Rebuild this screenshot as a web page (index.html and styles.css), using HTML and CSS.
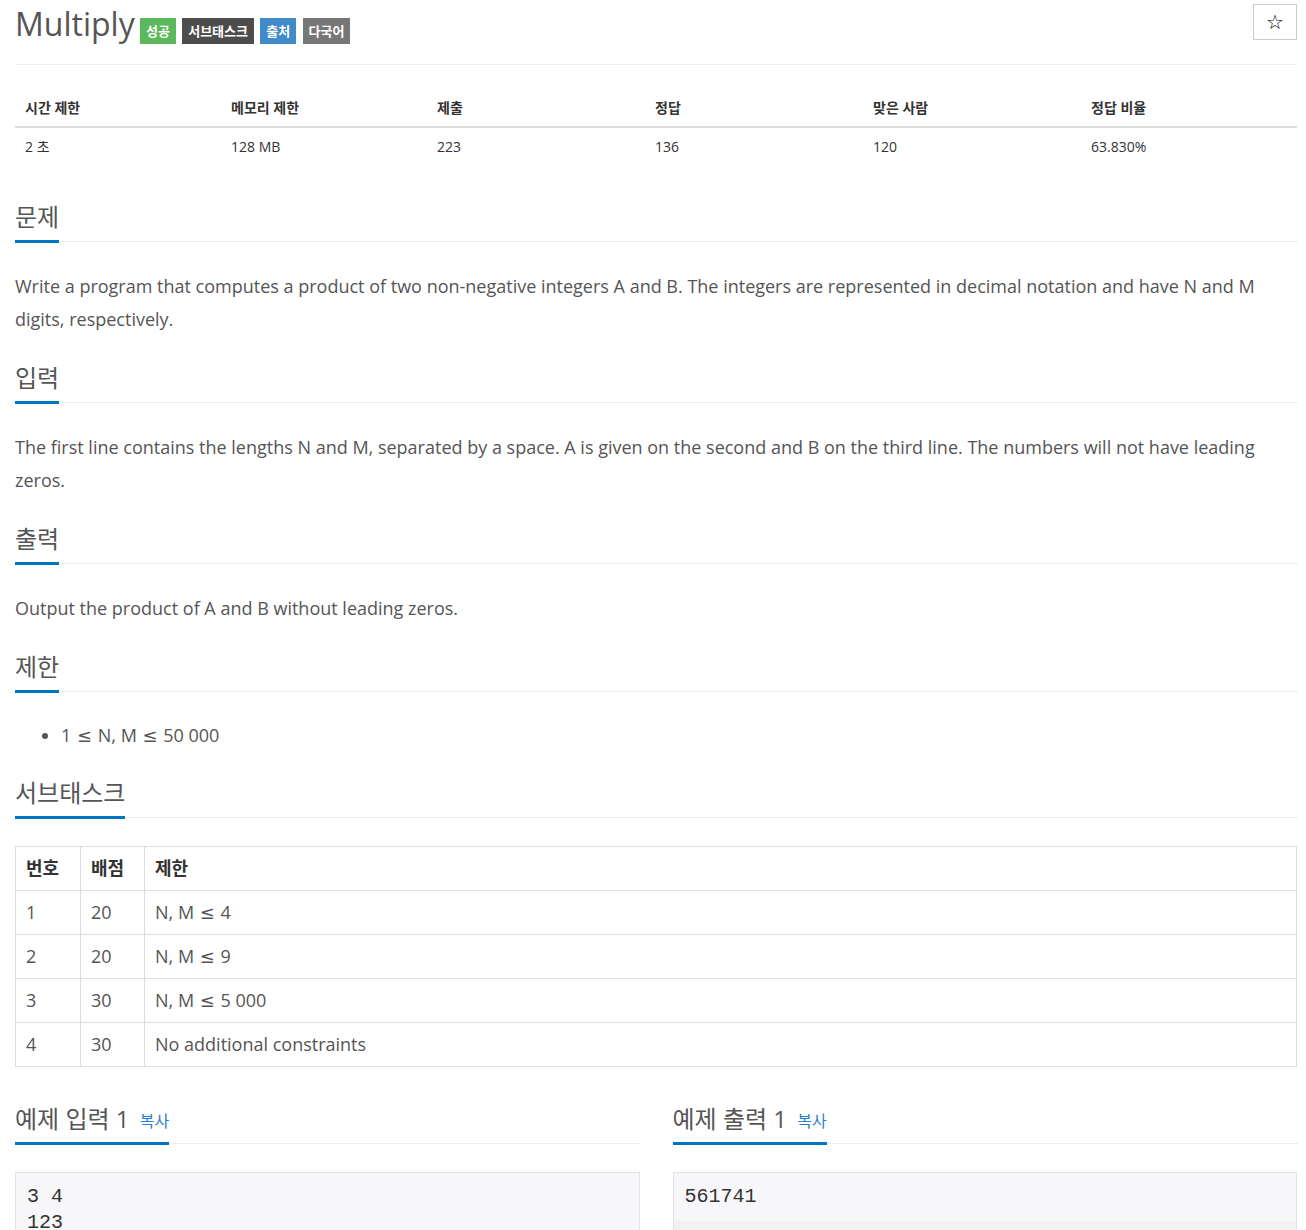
FILE: index.html
```html
<!DOCTYPE html>
<html lang="ko">

<head>
  <meta charset="UTF-8">
  <meta name="viewport" content="width=device-width, initial-scale=1.0">
  <title>Multiply</title>
  <link rel="stylesheet" href="styles.css">
</head>

<body>
  <div class="container">
    <!-- 문제 제목 -->
    <div class="page-header">
      <h1 class="problem-title">Multiply
        <span class="label label-success">성공</span>
        <span class="label label-inverse">서브태스크</span>
        <span class="label label-primary">출처</span>
        <span class="label label-default">다국어</span>
      </h1>
      <button class="star-btn" type="button">☆</button>
    </div>

    <!-- 제한 정보 -->
    <table class="info-table">
      <thead>
        <tr>
          <th class="col-time">시간 제한</th>
          <th class="col-mem">메모리 제한</th>
          <th class="col-mid">제출</th>
          <th class="col-mid">정답</th>
          <th class="col-mid">맞은 사람</th>
          <th>정답 비율</th>
        </tr>
      </thead>
      <tbody>
        <tr>
          <td>2 초</td>
          <td>128 MB</td>
          <td>223</td>
          <td>136</td>
          <td>120</td>
          <td>63.830%</td>
        </tr>
      </tbody>
    </table>

    <section class="problem-section">
      <div class="headline">
        <h2>문제</h2>
      </div>
      <p>Write a program that computes a product of two non-negative integers A and B. The integers are represented in decimal notation and have N and M digits, respectively.</p>
    </section>

    <section class="problem-section">
      <div class="headline">
        <h2>입력</h2>
      </div>
      <p>The first line contains the lengths N and M, separated by a space. A is given on the second and B on the third line. The numbers will not have leading zeros.</p>
    </section>

    <section class="problem-section">
      <div class="headline">
        <h2>출력</h2>
      </div>
      <p>Output the product of A and B without leading zeros.</p>
    </section>

    <section class="problem-section">
      <div class="headline">
        <h2>제한</h2>
      </div>
      <ul class="limit-list">
        <li>1 <span class="rel">≤</span> N, M <span class="rel">≤</span> 50 000</li>
      </ul>
    </section>

    <section class="problem-section">
      <div class="headline">
        <h2>서브태스크</h2>
      </div>
      <table class="subtask-table">
        <thead>
          <tr>
            <th class="col-no">번호</th>
            <th class="col-score">배점</th>
            <th>제한</th>
          </tr>
        </thead>
        <tbody>
          <tr><td>1</td><td>20</td><td>N, M <span class="rel">≤</span> 4</td></tr>
          <tr><td>2</td><td>20</td><td>N, M <span class="rel">≤</span> 9</td></tr>
          <tr><td>3</td><td>30</td><td>N, M <span class="rel">≤</span> 5 000</td></tr>
          <tr><td>4</td><td>30</td><td>No additional constraints</td></tr>
        </tbody>
      </table>
    </section>

    <!-- 예제 -->
    <div class="sample-row">
      <section class="problem-section">
        <div class="headline sample-headline">
          <h2>예제 입력 1 <a href="#" class="copy-button">복사</a></h2>
        </div>
        <pre class="sampledata">3 4
123
4567</pre>
      </section>
      <section class="problem-section">
        <div class="headline sample-headline">
          <h2>예제 출력 1 <a href="#" class="copy-button">복사</a></h2>
        </div>
        <pre class="sampledata">561741</pre>
      </section>
    </div>
  </div>
</body>

</html>
```

FILE: styles.css
```css
* {
  margin: 0;
  padding: 0;
  box-sizing: border-box;
}

body {
  font-family: "Open Sans", "Noto Sans CJK KR", sans-serif;
  color: #555;
  background-color: #fff;
}

.container {
  width: 1282px;
  margin-left: 15px;
  padding-top: 2px;
}

/* 제목 영역 */
.page-header {
  display: flex;
  justify-content: space-between;
  align-items: flex-start;
  padding-bottom: 19px;
  border-bottom: 1px solid #eee;
}

.problem-title {
  font-size: 32px;
  font-weight: 400;
  color: #555;
  line-height: normal;
}

.label {
  display: inline-block;
  font-size: 13px;
  font-weight: 700;
  line-height: 16px;
  padding: 5px 6px;
  margin-left: -2px;
  color: #fff;
  vertical-align: 0;
}

.label-success {
  background-color: #5cb85c;
  margin-left: -3px;
}

.label-inverse {
  background-color: #4d4d4d;
}

.label-primary {
  background-color: #428bca;
}

.label-default {
  background-color: #777;
}

.star-btn {
  width: 44px;
  height: 36px;
  margin-top: 2px;
  border: 1px solid #ccc;
  background: #fff;
  color: #000;
  font-size: 20px;
  font-weight: 700;
  line-height: 1;
  font-family: "DejaVu Sans", sans-serif;
}

/* 시간 제한 표 */
.info-table {
  width: 100%;
  border-collapse: collapse;
  margin: 24px 0 38px;
  font-size: 14px;
  color: #333;
}

.info-table th,
.info-table td {
  text-align: left;
  padding: 8px 10px;
  line-height: 21px;
}

.info-table th {
  font-weight: 700;
  border-bottom: 2px solid #ddd;
}

.info-table .col-time,
.info-table .col-mem {
  width: 206px;
}

.info-table .col-mid {
  width: 218px;
}

/* 섹션 */
.problem-section {
  margin-bottom: 28px;
}

.headline {
  border-bottom: 1px dotted #ddd;
  margin-bottom: 28px;
}

.headline h2 {
  display: inline-block;
  font-size: 24px;
  font-weight: 400;
  line-height: 28px;
  padding-bottom: 9px;
  border-bottom: 3px solid #0076c0;
  margin-bottom: -2px;
  color: #555;
}

.sample-headline h2 {
  padding-bottom: 7px;
}

.copy-button {
  font-size: 16px;
  color: #2a7dd0;
  text-decoration: none;
  margin-left: 4px;
  vertical-align: 1px;
}

.problem-section p {
  font-size: 18px;
  line-height: 33px;
}

.limit-list {
  padding-left: 46px;
  font-size: 18px;
  line-height: 30px;
}

/* 부등호 */
.rel {
  font-family: "DejaVu Sans", sans-serif;
  margin: 0 1px;
}

/* 서브태스크 표 */
.subtask-table {
  width: 100%;
  border-collapse: collapse;
  margin-top: 2px;
  margin-bottom: 38px;
  font-size: 18px;
}

.subtask-table th,
.subtask-table td {
  text-align: left;
  padding: 9px 10px;
  line-height: 25px;
  border: 1px solid #ddd;
}

.subtask-table th {
  font-weight: 700;
  color: #333;
}

.subtask-table .col-no {
  width: 65px;
}

.subtask-table .col-score {
  width: 64px;
}

/* 예제 */
.sample-row {
  display: grid;
  grid-template-columns: 1fr 1fr;
  column-gap: 33px;
}

/* 아래쪽 15px 띠는 가로 스크롤바 자리 */
.sampledata {
  font-family: "Liberation Mono", monospace;
  font-size: 20px;
  line-height: 26px;
  padding: 11px 11px 26px;
  color: #333;
  background: linear-gradient(to top, #f1f1f1 15px, #f7f7f9 15px);
  border: 1px solid #e1e1e8;
  overflow-x: auto;
}
```
